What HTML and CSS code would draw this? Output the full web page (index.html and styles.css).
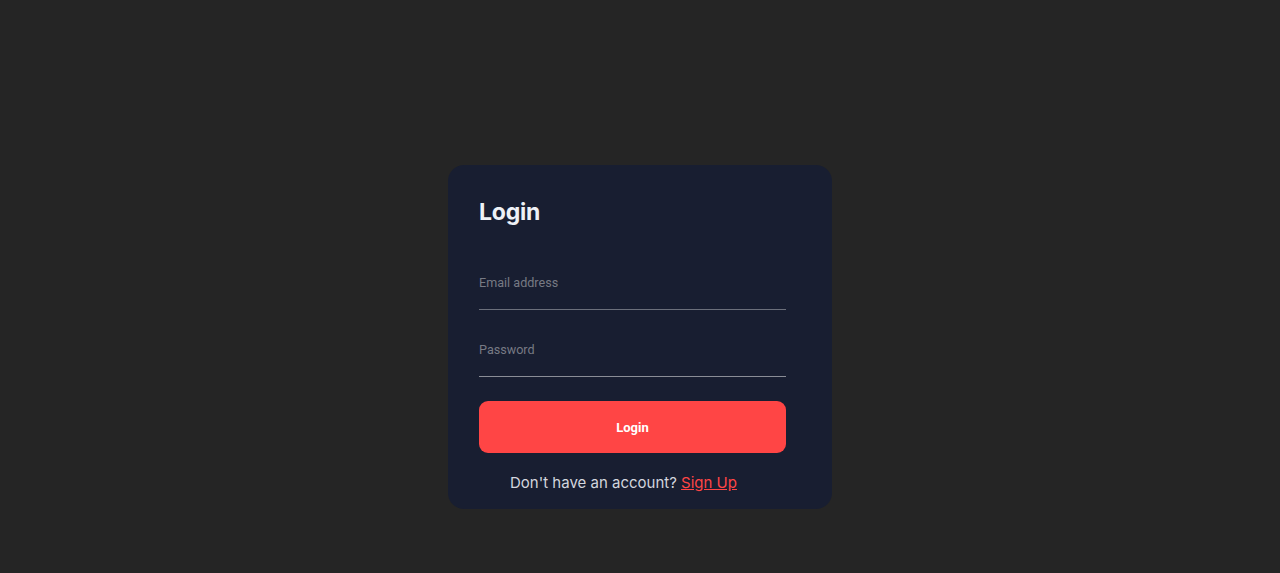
FILE: index.html
```html
<!DOCTYPE html>
<html lang="en">
<head>
<meta charset="utf-8">
<title>Login</title>
<link rel="stylesheet" href="styles.css">
</head>
<body>
  <main class="page">
    <section class="card">
      <h1 class="title">Login</h1>
      <form class="form">
        <input class="field field-email" type="email" placeholder="Email address">
        <input class="field field-password" type="password" placeholder="Password">
        <button class="btn" type="button">Login</button>
      </form>
      <p class="footer">Don't have an account? <a class="link" href="#">Sign Up</a></p>
    </section>
  </main>
</body>
</html>
```

FILE: styles.css
```css
* { box-sizing: border-box; }
html, body {
  margin: 0;
  padding: 0;
  background: #252525;
  height: 100%;
}
body {
  font-family: Inter, "Noto Sans", sans-serif;
}
.page {
  display: flex;
  justify-content: center;
  padding-top: 165px;
}
.card {
  width: 384px;
  height: 344px;
  background: #181e31;
  border-radius: 16px;
  padding: 33px 46px 0 31px;
  display: flex;
  flex-direction: column;
}
.title {
  margin: 0;
  font-family: Inter, sans-serif;
  font-weight: 700;
  font-size: 23px;
  line-height: 29px;
  color: #eef1f6;
  letter-spacing: -0.2px;
}
.form {
  display: flex;
  flex-direction: column;
  margin-top: 36px;
}
.field {
  width: 307px;
  background: transparent;
  border: none;
  border-bottom: 1px solid #8a8d96;
  outline: none;
  font-family: Roboto, sans-serif;
  font-size: 12.6px;
  line-height: 15px;
  padding: 12px 0 19px;
  color: #e0e0e0;
}
.field-email { border-bottom-color: #6b6f7b; }
.field::placeholder { color: #777a84; }
.field-password { margin-top: 20px; }
.btn {
  margin-top: 24px;
  width: 307px;
  height: 52px;
  border: none;
  border-radius: 9px;
  background: #ff4545;
  color: #ffffff;
  font-family: Roboto, sans-serif;
  font-weight: 700;
  font-size: 13px;
}
.footer {
  margin: 21px 0 0 31px;
  font-family: Inter, sans-serif;
  font-size: 15px;
  line-height: 18px;
  color: #d3d6de;
}
.link {
  color: #ff4545;
  text-decoration: underline;
}
```
